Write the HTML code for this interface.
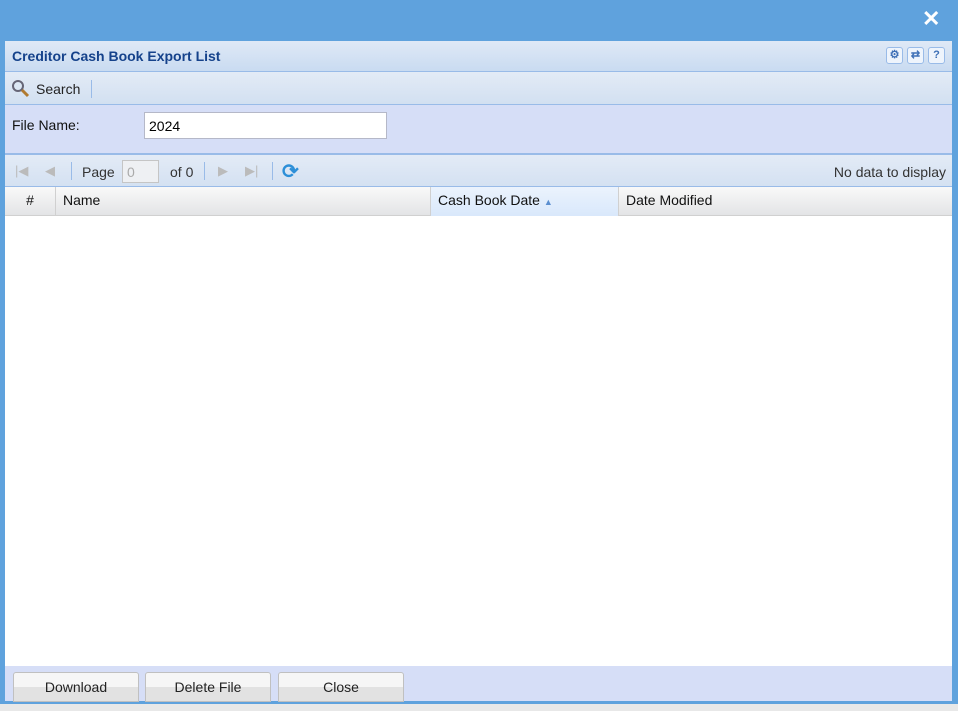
<!DOCTYPE html>
<html><head><style>
*{box-sizing:border-box;margin:0;padding:0}
body{width:958px;height:711px;background:#5fa2dd;font-family:"Liberation Sans",sans-serif;font-size:14px;position:relative;overflow:hidden}
.a{position:absolute}
.btm{left:0;top:704px;width:958px;height:7px;background:#e8e8e8}
.x{left:922px;top:6px;color:#fff;font-size:22px;font-weight:bold}
.title{left:5px;top:41px;width:947px;height:31px;background:linear-gradient(#dfe9f6,#c9dbf1);border-bottom:1px solid #99bbe8;color:#15428b;font-weight:bold;font-size:14px;padding:7px 7px}
.tb{left:5px;top:72px;width:947px;height:33px;background:linear-gradient(#e3ebf6,#d2e0f1);border-bottom:1px solid #99bbe8}
.form{left:5px;top:105px;width:947px;height:50px;background:#d6def7;border-bottom:2px solid #99bbe8}
.pg{left:5px;top:155px;width:947px;height:32px;background:linear-gradient(#e3ebf6,#d4e1f2);border-bottom:1px solid #99bbe8;color:#333}
.hd{left:5px;top:187px;width:947px;height:29px;background:linear-gradient(#f9f9f9,#e3e4e6);border-bottom:1px solid #d0d0d0}
.body{left:5px;top:216px;width:947px;height:450px;background:#fff}
.ft{left:5px;top:666px;width:947px;height:35px;background:#d6def7}
.btn{top:672px;height:30px;width:126px;border:1px solid #c0c0c0;border-radius:3px 3px 0 0;background:linear-gradient(#f6f6f6 50%,#e2e2e2 50%);text-align:center;line-height:29px;color:#222}
.ic{top:47px;width:17px;height:17px;border:1px solid #99bbe8;border-radius:3px;background:#eef4fc;color:#3d6fb6;font-size:11px;font-weight:bold;text-align:center;line-height:15px}
.sep{width:1px;height:18px;background:#99bbe8}
.col{border-right:1px solid #d0d0d0;height:29px;top:0;line-height:27px;padding-left:7px;color:#111}
</style></head><body>
<div class="a btm"></div>
<div class="a x">✕</div>
<div class="a title">Creditor Cash Book Export List</div>
<div class="a ic" style="left:886px">⚙</div>
<div class="a ic" style="left:907px">⇄</div>
<div class="a ic" style="left:928px">?</div>
<div class="a tb">
 <svg class="a" style="left:6px;top:7px" width="20" height="20"><circle cx="7" cy="7" r="5" fill="#dce8f5" stroke="#667" stroke-width="2"/><line x1="11" y1="11" x2="17" y2="17" stroke="#b07a30" stroke-width="3"/></svg>
 <div class="a" style="left:31px;top:9px;color:#222">Search</div>
 <div class="a sep" style="left:86px;top:8px"></div>
</div>
<div class="a form">
 <div class="a" style="left:7px;top:12px;color:#111">File Name:</div>
 <div class="a" style="left:139px;top:7px;width:243px;height:27px;background:#fff;border:1px solid #b5b8c8;padding:5px 4px;color:#000">2024</div>
</div>
<div class="a pg">
 <div class="a" style="left:10px;top:8px;color:#bbb;font-size:13px">|◀</div>
 <div class="a" style="left:40px;top:8px;color:#bbb;font-size:13px">◀</div>
 <div class="a sep" style="left:66px;top:7px"></div>
 <div class="a" style="left:77px;top:9px">Page</div>
 <div class="a" style="left:117px;top:5px;width:37px;height:23px;border:1px solid #c5c5c5;background:#eef0f3;color:#aaa;padding:3px 4px">0</div>
 <div class="a" style="left:165px;top:9px">of 0</div>
 <div class="a sep" style="left:199px;top:7px"></div>
 <div class="a" style="left:213px;top:8px;color:#bbb;font-size:13px">▶</div>
 <div class="a" style="left:240px;top:8px;color:#bbb;font-size:13px">▶|</div>
 <div class="a sep" style="left:267px;top:7px"></div>
 <div class="a" style="left:277px;top:4px;color:#2d8fd8;font-size:20px;font-weight:bold">⟳</div>
 <div class="a" style="right:6px;top:9px">No data to display</div>
</div>
<div class="a hd">
 <div class="a col" style="left:0;width:51px;text-align:center;padding:0">#</div>
 <div class="a col" style="left:51px;width:375px">Name</div>
 <div class="a col" style="left:426px;width:188px;background:linear-gradient(#ebf3fd,#d9e8fb)">Cash Book Date <span style="color:#5b8fd0;font-size:9px">▲</span></div>
 <div class="a col" style="left:614px;width:333px;border:none">Date Modified</div>
</div>
<div class="a body"></div>
<div class="a ft"></div>
<div class="a btn" style="left:13px">Download</div>
<div class="a btn" style="left:145px">Delete File</div>
<div class="a btn" style="left:278px">Close</div>
</body></html>
